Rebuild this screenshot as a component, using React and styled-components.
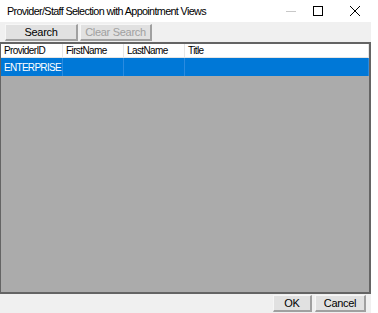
import React from 'react';
import styled, { createGlobalStyle } from 'styled-components';

const GlobalStyle = createGlobalStyle`
  html, body { margin: 0; padding: 0; background: #ffffff; }
  body { font-family: "Liberation Sans", Arial, sans-serif; }
`;

// Styles
const Window = styled.div`
  width: 378px;
  height: 313px;
  background: #ffffff;
  display: flex;
  flex-direction: column;
  overflow: hidden;
`;

const TitleBar = styled.div`
  height: 22px;
  display: flex;
  align-items: center;
  padding-left: 7px;
  flex-shrink: 0;
`;

const Title = styled.span`
  flex: 1;
  font-size: 10.8px;
  color: #000;
  letter-spacing: -0.65px;
`;

const Caption = styled.div`
  width: ${(props) => props.width}px;
  height: 22px;
  display: flex;
  align-items: center;
  justify-content: center;
`;

const Client = styled.div`
  flex: 1;
  width: 371px;
  background: #f0f0f0;
  display: flex;
  flex-direction: column;
`;

const Toolbar = styled.div`
  height: 18px;
  display: flex;
  gap: 2px;
  padding: 2px 0 0 5px;
`;

const Button = styled.div`
  box-sizing: border-box;
  width: ${(props) => props.width}px;
  height: 17px;
  background: #e1e1e1;
  border-top: 1px solid #f6f6f6;
  border-left: 1px solid #f6f6f6;
  border-right: 2px solid #a0a0a0;
  border-bottom: 2px solid #a0a0a0;
  display: flex;
  align-items: center;
  justify-content: center;
  font-size: 11px;
  letter-spacing: -0.3px;
  color: ${(props) => (props.disabled ? '#a0a0a0' : '#000')};
`;

const Grid = styled.div`
  box-sizing: border-box;
  height: 252px;
  border: 2px solid #646464;
  border-left-width: 1px;
  background: #ababab;
  display: flex;
  flex-direction: column;
`;

const Row = styled.div`
  display: grid;
  grid-template-columns: 62px 61px 61px 1fr;
  height: ${(props) => props.height}px;
  background: ${(props) => (props.selected ? '#0078d7' : '#ffffff')};
`;

const HeaderCell = styled.div`
  font-size: 10px;
  letter-spacing: -0.6px;
  color: #000;
  padding-left: 3px;
  display: flex;
  align-items: center;
  border-right: 1px solid #e5e5e5;
  border-bottom: 1px solid #e5e5e5;
`;

const Cell = styled.div`
  font-size: 10px;
  letter-spacing: -0.7px;
  color: #ffffff;
  padding-left: 3px;
  display: flex;
  align-items: center;
  border-right: 1px solid #2a8be0;
`;

const Footer = styled.div`
  flex: 1;
  display: flex;
  justify-content: flex-end;
  align-items: flex-start;
  gap: 3px;
  padding: 1px 5px 0 0;
`;

const columns = ['ProviderID', 'FirstName', 'LastName', 'Title'];

export default function App() {
  return (
    <Window>
      <GlobalStyle />
      <TitleBar>
        <Title>Provider/Staff Selection with Appointment Views</Title>
        <Caption width={26}>
          <svg width="12" height="12" viewBox="0 0 12 12">
            <line x1="1" y1="6.5" x2="11" y2="6.5" stroke="#c8c8c8" strokeWidth="1" />
          </svg>
        </Caption>
        <Caption width={28}>
          <svg width="12" height="12" viewBox="0 0 12 12">
            <rect x="1.5" y="1.5" width="9" height="9" fill="none" stroke="#000" strokeWidth="1" />
          </svg>
        </Caption>
        <Caption width={46}>
          <svg width="12" height="12" viewBox="0 0 12 12">
            <path d="M1 1 L11 11 M11 1 L1 11" stroke="#000" strokeWidth="1" />
          </svg>
        </Caption>
      </TitleBar>
      <Client>
        <Toolbar>
          <Button width={73}>Search</Button>
          <Button width={72} disabled>Clear Search</Button>
        </Toolbar>
        <Grid>
          <Row height={14}>
            {columns.map((c) => (
              <HeaderCell key={c}>{c}</HeaderCell>
            ))}
          </Row>
          <Row height={18} selected>
            <Cell>ENTERPRISE</Cell>
            <Cell />
            <Cell />
            <Cell />
          </Row>
        </Grid>
        <Footer>
          <Button width={39}>OK</Button>
          <Button width={51}>Cancel</Button>
        </Footer>
      </Client>
    </Window>
  );
}
